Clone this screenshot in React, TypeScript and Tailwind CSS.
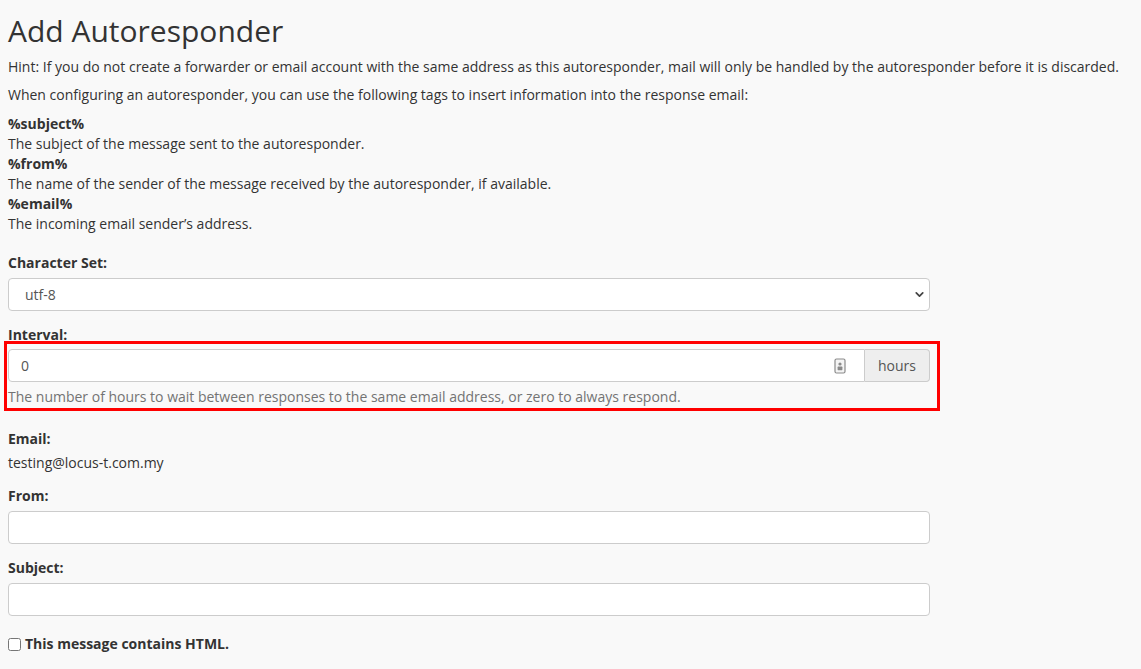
import { ChevronDown } from 'lucide-react';

const TAGS = [
  { tag: '%subject%', desc: 'The subject of the message sent to the autoresponder.' },
  { tag: '%from%', desc: 'The name of the sender of the message received by the autoresponder, if available.' },
  { tag: '%email%', desc: 'The incoming email sender’s address.' },
];

function FieldLabel({ children }: { children: React.ReactNode }) {
  return <label className="block font-bold leading-5 text-[#333]">{children}</label>;
}

function TextInput() {
  return (
    <input
      type="text"
      className="mt-[5px] block h-[33px] w-full rounded-[4px] border border-[#ccc] bg-white px-3 text-sm text-[#555] outline-none"
    />
  );
}

function AutofillIcon() {
  return (
    <svg width="12" height="16" viewBox="0 0 12 16" className="shrink-0">
      <rect x="1" y="1" width="10" height="14" rx="1.5" fill="#f4f4f4" stroke="#8a8a8a" strokeWidth="1.2" />
      <circle cx="6" cy="6" r="1.6" fill="#8a8a8a" />
      <rect x="3.6" y="8.6" width="4.8" height="3.6" rx="0.6" fill="#8a8a8a" />
    </svg>
  );
}

export default function App() {
  return (
    <div className="min-h-screen bg-[#f9f9f9] px-2 text-sm leading-5 text-[#333]" style={{ fontFamily: '"Open Sans", "Liberation Sans", sans-serif' }}>
      <h1 className="pt-[14px] text-[30px] leading-[34px] font-normal text-[#333]">Add Autoresponder</h1>

      <p className="mt-[9px]">
        Hint: If you do not create a forwarder or email account with the same address as this autoresponder, mail will only be handled by the autoresponder before it is discarded.
      </p>
      <p className="mt-[8px]">
        When configuring an autoresponder, you can use the following tags to insert information into the response email:
      </p>

      <dl className="mt-[9px]">
        {TAGS.map((t) => (
          <div key={t.tag}>
            <dt className="font-bold">{t.tag}</dt>
            <dd>{t.desc}</dd>
          </div>
        ))}
      </dl>

      <div className="w-[922px]">
        {/* character set */}
        <div className="mt-[19px]">
          <FieldLabel>Character Set:</FieldLabel>
          <div className="relative mt-[5px]">
            <select className="block h-[33px] w-full appearance-none rounded-[4px] border border-[#ccc] bg-white pl-4 text-sm text-[#555] outline-none">
              <option>utf-8</option>
            </select>
            <ChevronDown className="pointer-events-none absolute right-[4px] top-[10px] h-[13px] w-[13px] text-[#444]" strokeWidth={3.2} />
          </div>
        </div>

        {/* interval */}
        <div className="mt-[14px]">
          <FieldLabel>Interval:</FieldLabel>
          <div className="relative mt-[4px]">
            <div className="flex h-[33px] w-full">
              <div className="flex flex-1 items-center rounded-l-[4px] border border-[#ccc] bg-white pl-3 pr-[18px]">
                <span className="flex-1 text-[#555]">0</span>
                <AutofillIcon />
              </div>
              <span className="flex w-[65px] items-center justify-center rounded-r-[4px] border border-l-0 border-[#ccc] bg-[#eee] text-[#555]">
                hours
              </span>
            </div>
            <p className="mt-[5px] text-[#737373]">
              The number of hours to wait between responses to the same email address, or zero to always respond.
            </p>
            <div className="pointer-events-none absolute -left-[4px] -right-[10px] -top-[8px] -bottom-[4px] border-[3px] border-[#ff0000]" />
          </div>
        </div>

        {/* email */}
        <div className="mt-[22px]">
          <FieldLabel>Email:</FieldLabel>
          <div className="mt-[4px]">testing@locus-t.com.my</div>
        </div>

        <div className="mt-[13px]">
          <FieldLabel>From:</FieldLabel>
          <TextInput />
        </div>

        <div className="mt-[14px]">
          <FieldLabel>Subject:</FieldLabel>
          <TextInput />
        </div>

        <label className="mt-[18px] flex items-center gap-[4px] font-bold">
          <input type="checkbox" className="h-[13px] w-[13px]" />
          This message contains HTML.
        </label>
      </div>
    </div>
  );
}
